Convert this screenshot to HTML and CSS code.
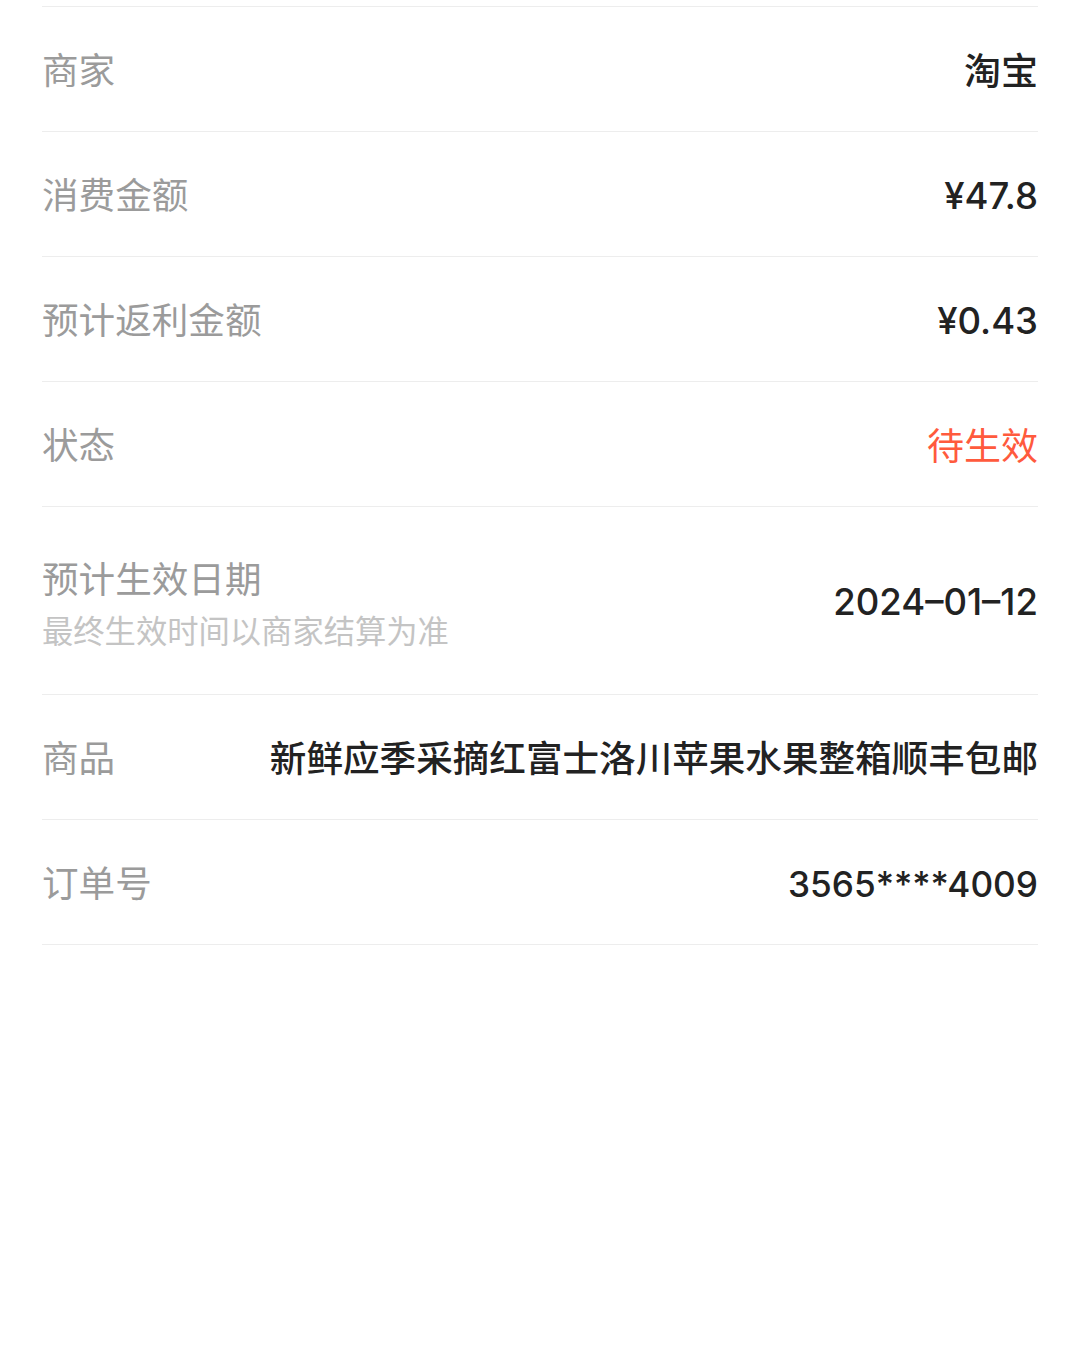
FILE: index.html
```html
<!DOCTYPE html>
<html lang="zh-CN">
<head>
<meta charset="utf-8">
<link rel="stylesheet" href="styles.css">
</head>
<body>
<div class="list">
  <div class="row"><div class="label">商家</div><div class="value">淘宝</div></div>
  <div class="row"><div class="label">消费金额</div><div class="value num">¥47.8</div></div>
  <div class="row"><div class="label">预计返利金额</div><div class="value num">¥0.43</div></div>
  <div class="row"><div class="label">状态</div><div class="value status">待生效</div></div>
  <div class="row tall">
    <div class="label-group">
      <div class="label">预计生效日期</div>
      <div class="sub">最终生效时间以商家结算为准</div>
    </div>
    <div class="value num">2024–01–12</div>
  </div>
  <div class="row"><div class="label">商品</div><div class="value long">新鲜应季采摘红富士洛川苹果水果整箱顺丰包邮</div></div>
  <div class="row"><div class="label">订单号</div><div class="value num order">3565****4009</div></div>
</div>
</body>
</html>
```
FILE: styles.css
```css
html, body {
  margin: 0;
  padding: 0;
  background: #ffffff;
}
body {
  font-family: "Inter", "Noto Sans CJK SC", sans-serif;
}
.list {
  margin: 6px 42px 0 42px;
  border-top: 1px solid #ededed;
}
.row {
  display: flex;
  align-items: center;
  justify-content: space-between;
  height: 124px;
  border-bottom: 1px solid #ededed;
}
.row.tall {
  height: 187px;
}
.label {
  font-family: "Noto Sans CJK SC", sans-serif;
  font-size: 36.6px;
  color: #9b9b9b;
  line-height: 1.2;
  white-space: nowrap;
}
.label-group {
  display: flex;
  flex-direction: column;
  gap: 11px;
  margin-top: 4px;
}
.sub {
  font-family: "Noto Sans CJK SC", sans-serif;
  font-size: 31.3px;
  color: #c4c4c4;
  line-height: 1.2;
  white-space: nowrap;
}
.value {
  font-family: "Noto Sans CJK SC", sans-serif;
  font-size: 37px;
  font-weight: 500;
  color: #222222;
  white-space: nowrap;
  line-height: 1.2;
}
.value.num {
  font-family: "Inter", "Noto Sans CJK SC", sans-serif;
  font-weight: 500;
  font-size: 36.5px;
  padding-top: 5px;
}
.value.order {
  font-size: 35.2px;
}
.value.status {
  color: #ff5a3d;
  font-weight: 400;
}
.value.long {
  font-size: 36.6px;
}
```
